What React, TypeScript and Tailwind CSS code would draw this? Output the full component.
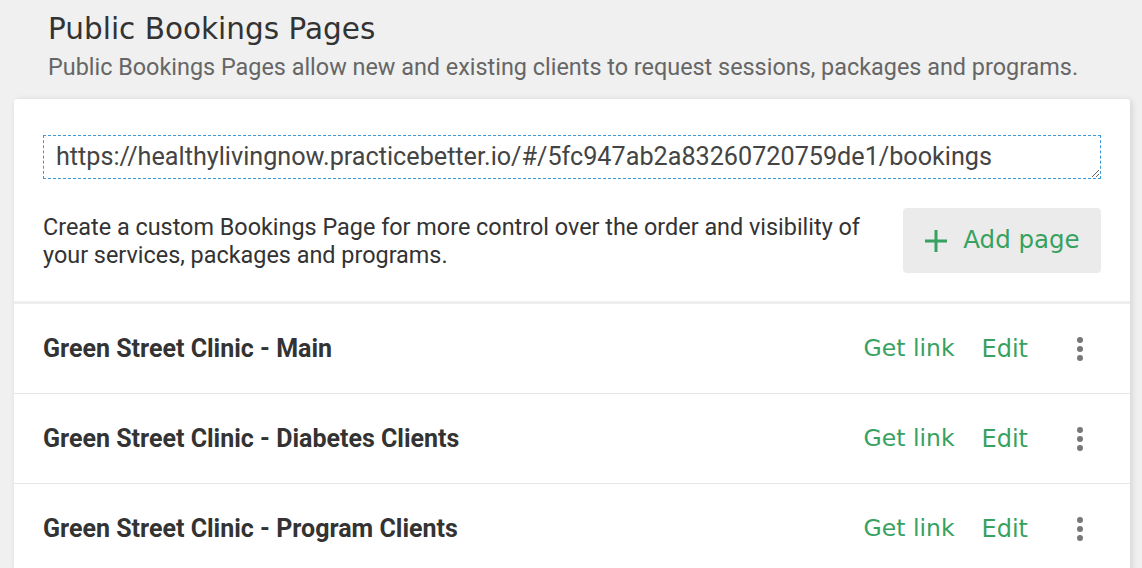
import React from 'react';

const heading = { fontFamily: '"DejaVu Sans", "Noto Sans", sans-serif' };
const body = { fontFamily: 'Roboto, "Liberation Sans", sans-serif' };

const pages = [
  'Green Street Clinic - Main',
  'Green Street Clinic - Diabetes Clients',
  'Green Street Clinic - Program Clients',
];

function Dots() {
  return (
    <svg width="8" height="26" viewBox="0 0 8 26" className="text-[#777]">
      <circle cx="4" cy="4" r="3" fill="currentColor" />
      <circle cx="4" cy="13" r="3" fill="currentColor" />
      <circle cx="4" cy="22" r="3" fill="currentColor" />
    </svg>
  );
}

export default function App() {
  return (
    <div className="min-h-[568px] overflow-hidden bg-[#f0f0f0] pt-[10px]" style={body}>
      <div className="px-[48px]">
        <h1 className="text-[29.5px] leading-[38px] text-[#333]" style={heading}>
          Public Bookings Pages
        </h1>
        <p className="mt-[4px] text-[23.4px] leading-[30px] text-[#666]">
          Public Bookings Pages allow new and existing clients to request sessions, packages and programs.
        </p>
      </div>

      <div className="ml-[14px] mr-[12px] mt-[17px] rounded-[3px] bg-white shadow-[2px_1px_6px_rgba(0,0,0,0.12)]">
        <div className="px-[29px] pt-[36px] pb-[28px]">
          <textarea
            readOnly
            rows={1}
            value="https://healthylivingnow.practicebetter.io/#/5fc947ab2a83260720759de1/bookings"
            className="block h-[44px] w-full resize border border-dashed border-[#3d9ad8] px-[12px] py-[6px] text-[25.2px] leading-[30px] text-[#444] outline-none"
          />
          <div className="mt-[29px] flex items-center justify-between">
            <p className="text-[23.4px] leading-[28px] text-[#333]">
              Create a custom Bookings Page for more control over the order and visibility of
              <br />
              your services, packages and programs.
            </p>
            <button className="flex h-[65px] w-[198px] shrink-0 items-center justify-center gap-[15px] rounded-[4px] bg-[#ebebeb] text-[24.5px] text-[#37a160]" style={heading}>
              <svg width="24" height="24" viewBox="0 0 24 24">
                <path d="M12 1v22M1 12h22" stroke="currentColor" strokeWidth="3" />
              </svg>
              <span>Add page</span>
            </button>
          </div>
        </div>

        <div className="border-t-[3px] border-[#eeeeee]">
          {pages.map((name) => (
            <div key={name} className="flex h-[90px] items-center border-b border-[#e6e6e6] pl-[29px] pr-[46px]">
              <span className="flex-1 text-[25px] font-bold text-[#333]">{name}</span>
              <span className="text-[23.5px] text-[#37a160]" style={heading}>Get link</span>
              <span className="ml-[27px] text-[24px] text-[#37a160]" style={heading}>Edit</span>
              <span className="ml-[48px] flex w-[8px] justify-center">
                <Dots />
              </span>
            </div>
          ))}
        </div>
      </div>
    </div>
  );
}
